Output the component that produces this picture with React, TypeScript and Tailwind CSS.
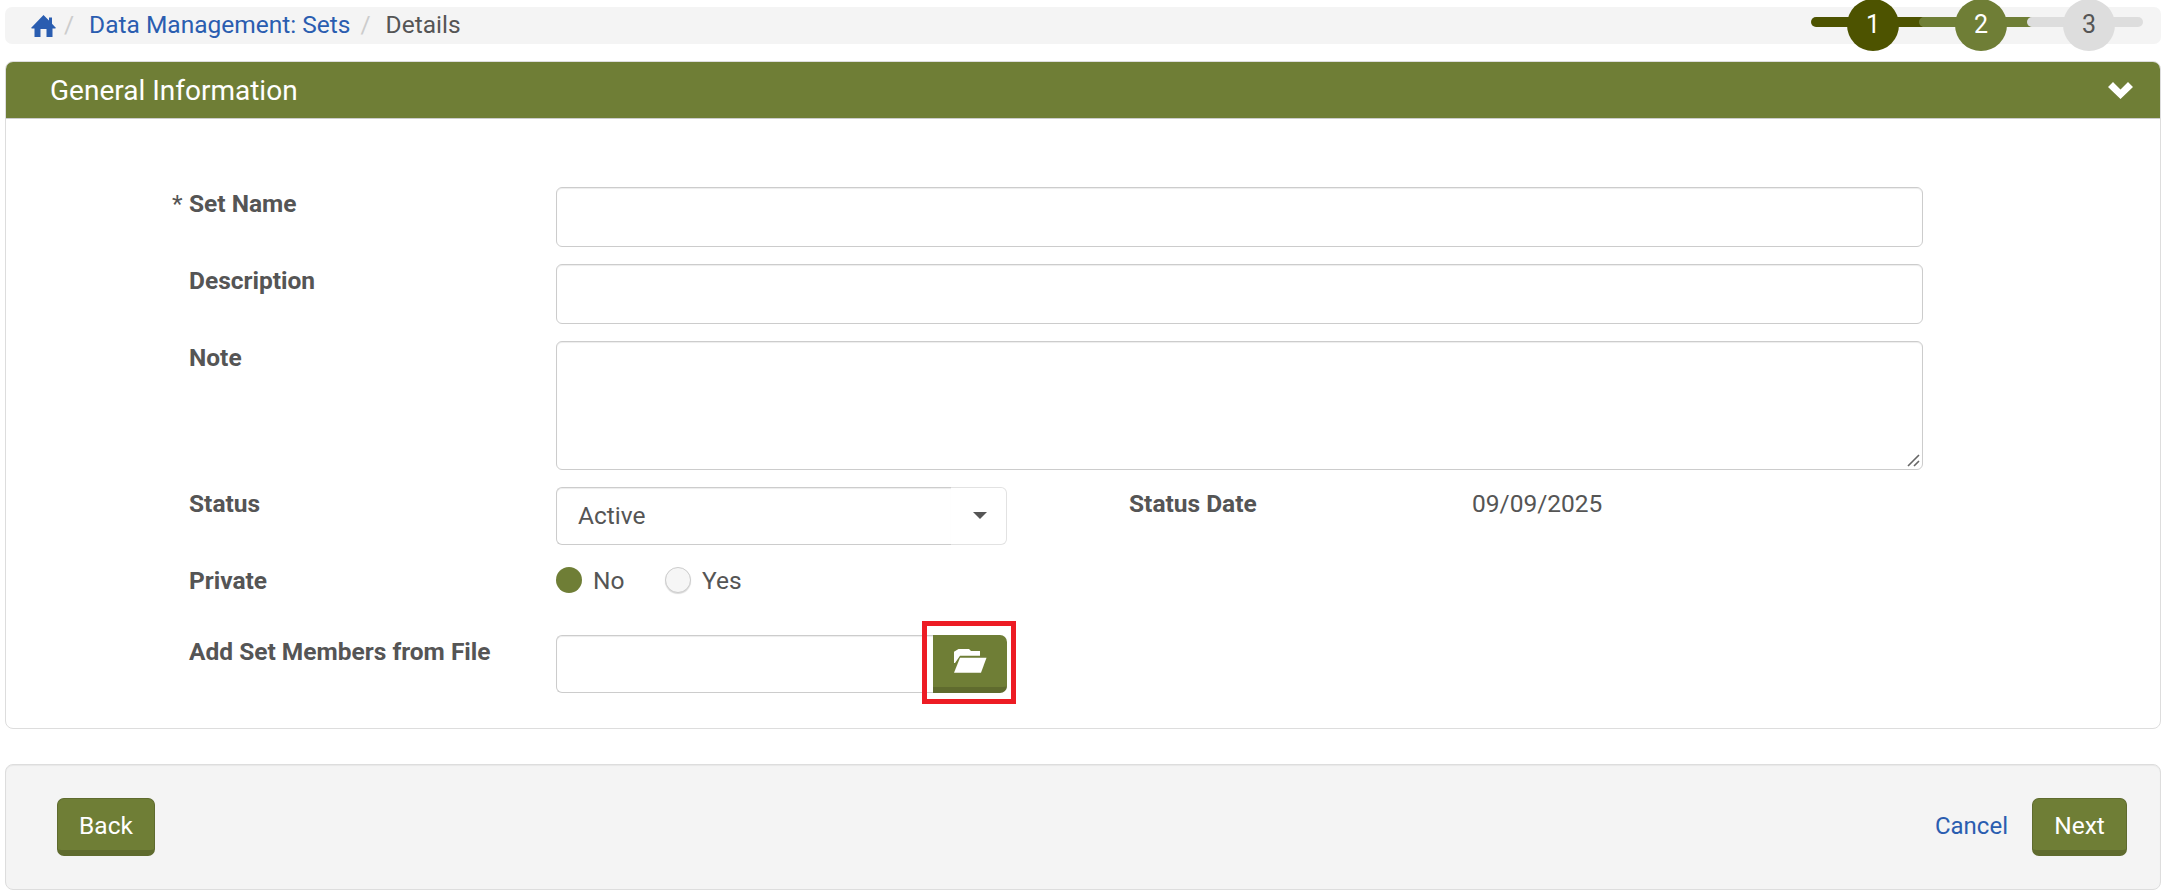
import React from "react";

const Home = () => (
  <svg viewBox="0 0 25 22" className="w-[25px] h-[22px] block" fill="#2a5db0">
    <path d="M12.5 0 L18 5.6 V2.5 H21 V8.8 L25 13 L24 13.4 H21.5 V22 H15.5 V14 H9.5 V22 H3.5 V13.4 H1 L0 13 Z" />
  </svg>
);

const Folder = () => (
  <svg viewBox="0 0 33 24" className="w-[33px] h-[24px] block" fill="#fff">
    <path d="M0 2.7 L4.5 0 H15 L17 2 H26 V6.7 H6 L1 14 L0 14 Z" />
    <path d="M6 8.7 H32.5 L27 23.7 H0 Z" />
  </svg>
);

const Chevron = () => (
  <svg viewBox="0 0 25 17" className="w-[25px] h-[17px] block" fill="#fff">
    <path d="M0 5 L5 0 L12.5 7.5 L20 0 L25 5 L12.5 17 Z" />
  </svg>
);

function Step({ n, bar, circle, text }: { n: number; bar: string; circle: string; text: string }) {
  return (
    <div className="relative w-[116px] h-[52px] -ml-[8px] first:ml-0 pl-[36px]">
      <div className={`absolute left-0 right-0 top-[18px] h-[10px] rounded-full ${bar}`} />
      <div className={`relative w-[52px] h-[52px] rounded-full flex items-center justify-center text-[25px] ${circle} ${text}`}>
        {n}
      </div>
    </div>
  );
}

const inputCls = "border border-[#cccccc] rounded-[6px] bg-white shadow-[inset_0_1px_1px_rgba(0,0,0,0.075)]";

function Label({ children, required }: { children: React.ReactNode; required?: boolean }) {
  return (
    <div className="w-[550px] shrink-0 pl-[183px] pt-[2px] relative font-bold text-[24.5px] leading-[30px] whitespace-nowrap">
      {required && <span className="absolute left-[166px] font-normal">*</span>}
      {children}
    </div>
  );
}

function Btn({ children, className }: { children: React.ReactNode; className?: string }) {
  return (
    <button className={`h-[58px] pt-[3px] rounded-[7px] bg-[#6f7e36] border border-[#5f6b2e] border-b-[6px] border-b-[#5f6b2e] text-white text-[24.5px] ${className ?? ""}`}>
      {children}
    </button>
  );
}

export default function App() {
  return (
    <div className="w-[2166px] h-[894px] bg-white text-[#555555] overflow-hidden font-['Roboto',sans-serif]">
      <div className="pt-[7px] px-[5px]">
        <div className="h-[37px] bg-[#f4f4f4] rounded-[7px] flex items-center justify-between pl-[26px] pr-[18px] text-[24.5px]">
          <div className="flex items-center">
            <Home />
            <span className="text-[#cccccc] ml-[8px] mr-[15px]">/</span>
            <span className="text-[#2a5db0]">Data Management: Sets</span>
            <span className="text-[#cccccc] ml-[10px] mr-[15px]">/</span>
            <span>Details</span>
          </div>
          <div className="flex -my-[8px] relative top-[-0.5px]">
            <Step n={1} bar="bg-[#4d5300]" circle="bg-[#4d5300]" text="text-white" />
            <Step n={2} bar="bg-[#6f7e36]" circle="bg-[#6f7e36]" text="text-white" />
            <Step n={3} bar="bg-[#dddddd]" circle="bg-[#dddddd]" text="text-[#555555]" />
          </div>
        </div>

        <div className="mt-[17px] h-[668px] border border-[#dddddd] rounded-[8px] overflow-hidden">
          <div className="h-[57px] pt-[1px] bg-[#6f7e36] border-b border-[#cccccc] flex items-center justify-between pl-[44px] pr-[27px] text-white text-[28px]">
            <span>General Information</span>
            <Chevron />
          </div>
          <div className="pt-[68px] flex flex-col">
            <div className="flex h-[77px]">
              <Label required>Set Name</Label>
              <div className={`${inputCls} w-[1367px] h-[60px]`} />
            </div>
            <div className="flex h-[77px]">
              <Label>Description</Label>
              <div className={`${inputCls} w-[1367px] h-[60px]`} />
            </div>
            <div className="flex h-[146px]">
              <Label>Note</Label>
              <div className={`${inputCls} w-[1367px] h-[129px] relative`}>
                <svg viewBox="0 0 13 13" className="absolute right-[2px] bottom-[2px] w-[13px] h-[13px]" stroke="#666" strokeWidth="1.6">
                  <path d="M1 12 L12 1 M7 12 L12 7" />
                </svg>
              </div>
            </div>
            <div className="flex h-[77px]">
              <Label>Status</Label>
              <div className="flex w-[451px] h-[58px] shrink-0">
                <div className="w-[395px] border border-r-0 border-[#cccccc] rounded-l-[6px] flex items-center pl-[21px] text-[24.5px] shadow-[inset_0_1px_1px_rgba(0,0,0,0.075)]">
                  Active
                </div>
                <div className="flex-1 border border-l-0 border-[#e2e2e2] rounded-r-[6px] flex items-center justify-center">
                  <div className="w-0 h-0 border-x-[7.5px] border-x-transparent border-t-[7px] border-t-[#555555] -mt-[1px] ml-[2px]" />
                </div>
              </div>
              <div className="ml-[122px] w-[343px] font-bold text-[24.5px] leading-[30px] pt-[2px] whitespace-nowrap">Status Date</div>
              <div className="text-[24.5px] leading-[30px] pt-[2px]">09/09/2025</div>
            </div>
            <div className="flex h-[71px]">
              <Label>Private</Label>
              <div className="flex items-start text-[24.5px] leading-[30px] pt-[2px]">
                <div className="w-[26px] h-[26px] rounded-full bg-[#6f7e36] mt-[1px]" />
                <span className="ml-[11px] w-[36px]">No</span>
                <div className="w-[26px] h-[26px] rounded-full bg-[#f6f6f6] border border-[#cccccc] shadow-[0_1px_1px_rgba(0,0,0,0.15)] mt-[1px] ml-[36px]" />
                <span className="ml-[11px]">Yes</span>
              </div>
            </div>
            <div className="flex">
              <Label>Add Set Members from File</Label>
              <div className="flex w-[451px] h-[58px] items-stretch">
                <div className={`${inputCls} flex-1 rounded-r-none border-r-0`} />
                <div className="relative w-[74px]">
                  <div className="absolute -left-[11px] -right-[9px] -top-[14px] -bottom-[11px] border-[5px] border-[#ed1c24]" />
                  <div className="relative h-[58px] w-[74px] rounded-r-[7px] bg-[#6f7e36] border-b-[6px] border-b-[#5f6b2e] flex items-center justify-center">
                    <Folder />
                  </div>
                </div>
              </div>
            </div>
          </div>
        </div>

        <div className="mt-[35px] h-[126px] bg-[#f4f4f4] border border-[#dddddd] rounded-[8px] shadow-[inset_0_1px_1px_rgba(0,0,0,0.05)] flex items-center justify-between pl-[51px] pr-[33px]">
          <Btn className="w-[98px]">Back</Btn>
          <div className="flex items-center">
            <span className="text-[#2a5db0] text-[24px] -mt-[3px]">Cancel</span>
            <Btn className="w-[95px] ml-[24px]">Next</Btn>
          </div>
        </div>
      </div>
    </div>
  );
}
